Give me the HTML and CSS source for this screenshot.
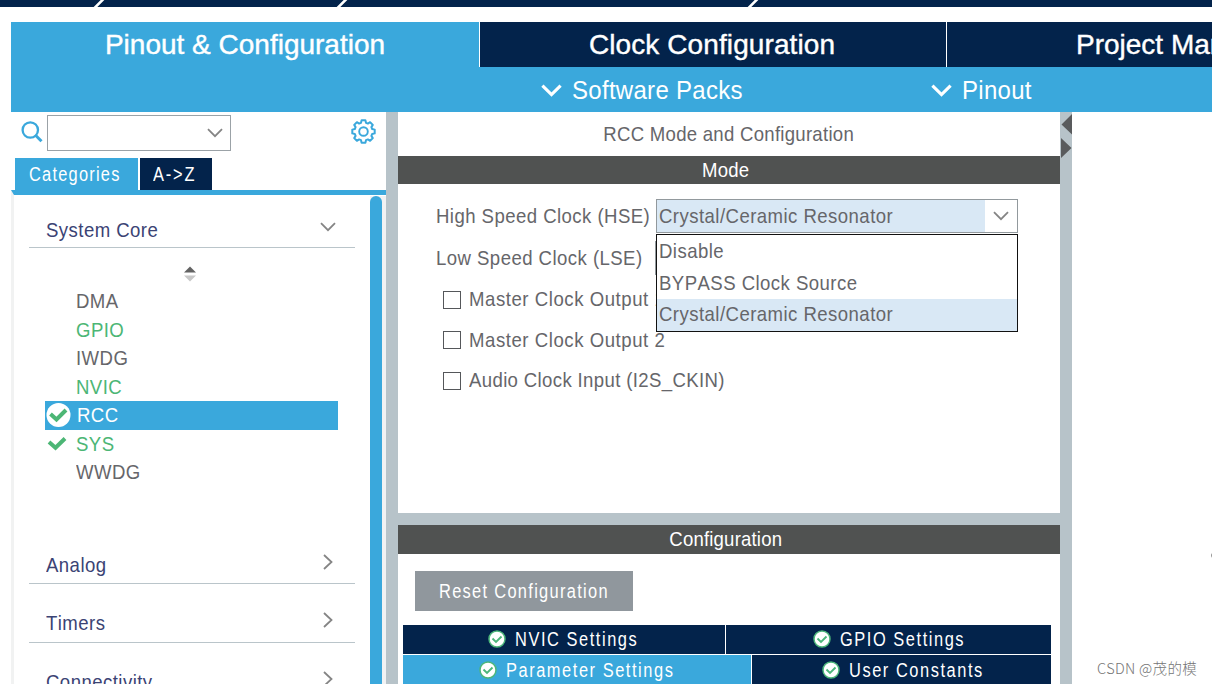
FILE: index.html
```
<!DOCTYPE html>
<html lang="en">
<head>
    <meta charset="UTF-8">
    <meta name="viewport" content="width=device-width, initial-scale=1.0">
    <title>Pinout &amp; Configuration</title>
    <link rel="stylesheet" href="styles.css">
</head>
<body>
    <!-- Shared icons -->
    <svg class="defs" width="0" height="0">
        <symbol id="chevron" viewBox="0 0 16 10"><path d="M1 1.2 L8 8.2 L15 1.2" fill="none" stroke="currentColor"/></symbol>
        <symbol id="arrow" viewBox="0 0 10 16"><path d="M1 1 L8.5 8 L1 15" fill="none" stroke="currentColor"/></symbol>
        <symbol id="ok" viewBox="0 0 18 18">
            <circle cx="9" cy="9" r="8" fill="#fff" stroke="#4cb67a" stroke-width="1.5"/>
            <path d="M4.5 8.5 L8 12 L13.5 6.5" fill="none" stroke="#4cb67a" stroke-width="1.9"/>
        </symbol>
    </svg>

    <div class="breadcrumb">
        <svg width="1212" height="7"><path d="M94.500 8 L103.500 -1 M337.500 8 L346.500 -1 M748.500 8 L757.500 -1" stroke="#fff" stroke-width="2.600"/></svg>
    </div>

    <div class="main-tabs">
        <div class="main-tab active"><span>Pinout &amp; Configuration</span></div>
        <div class="main-tab clock"><span>Clock Configuration</span></div>
        <div class="main-tab project"><span>Project Manager</span></div>
    </div>
    <div class="sub-menu">
        <div class="menu packs"><svg class="menu-icon"><use href="#chevron"/></svg><span>Software Packs</span></div>
        <div class="menu"><svg class="menu-icon"><use href="#chevron"/></svg><span>Pinout</span></div>
    </div>

    <div class="workspace">
        <div class="sidebar">
            <div class="search-row">
                <svg class="search-icon" viewBox="0 0 22 22"><circle cx="9.300" cy="9" r="7.700" fill="none" stroke="#3aa8dc" stroke-width="2.300"/><path d="M14.800 14.500 L20.500 20.200" stroke="#3aa8dc" stroke-width="3"/></svg>
                <div class="search-box"><svg class="chevron"><use href="#chevron"/></svg></div>
                <svg class="gear" viewBox="-12.500 -12.500 25 25" fill="none" stroke="#3aa8dc">
                    <circle r="4.300" stroke-width="1.900"/>
                    <path stroke-width="2" stroke-linejoin="round" d="M-1.900 -11.200 L1.900 -11.200 L2.500 -8.700 L4.400 -7.900 L6.600 -9.300 L9.300 -6.600 L7.900 -4.400 L8.700 -2.500 L11.200 -1.900 L11.200 1.900 L8.700 2.500 L7.900 4.400 L9.300 6.600 L6.600 9.300 L4.400 7.900 L2.500 8.700 L1.900 11.200 L-1.900 11.200 L-2.500 8.700 L-4.400 7.900 L-6.600 9.300 L-9.300 6.600 L-7.900 4.400 L-8.700 2.500 L-11.200 1.900 L-11.200 -1.900 L-8.700 -2.500 L-7.900 -4.400 L-9.300 -6.600 L-6.600 -9.300 L-4.400 -7.900 L-2.500 -8.700 Z"/>
                </svg>
            </div>
            <div class="side-tabs">
                <div class="side-tab active"><span class="spaced">Categories</span></div>
                <div class="side-tab az"><span class="spaced">A-&gt;Z</span></div>
            </div>
            <div class="side-body">
                <div class="categories">
                    <div class="category open"><span class="narrow">System Core</span><svg class="chevron"><use href="#chevron"/></svg></div>
                    <div class="sort"><svg width="12" height="16"><path d="M0 6.500 L6 0.500 L12 6.500 Z" fill="#636363"/><path d="M0 9.500 L6 15.500 L12 9.500 Z" fill="#c8c8c8"/></svg></div>
                    <ul class="peripherals">
                        <li><span class="narrow">DMA</span></li>
                        <li class="used"><span class="narrow">GPIO</span></li>
                        <li><span class="narrow">IWDG</span></li>
                        <li class="used"><span class="narrow">NVIC</span></li>
                        <li class="selected"><svg class="mark" viewBox="0 0 26 26"><circle cx="13.500" cy="13" r="12" fill="#fff"/><path d="M5.500 12 L11.500 17.500 L21 8" fill="none" stroke="#4cb675" stroke-width="4"/></svg><span class="narrow">RCC</span></li>
                        <li class="used"><svg class="mark" viewBox="0 0 26 26"><path d="M4 11 L10.500 16.700 L20 7.500" fill="none" stroke="#4cb675" stroke-width="4"/></svg><span class="narrow">SYS</span></li>
                        <li><span class="narrow">WWDG</span></li>
                    </ul>
                    <div class="category"><span class="narrow">Analog</span><svg class="arrow"><use href="#arrow"/></svg></div>
                    <div class="category"><span class="narrow">Timers</span><svg class="arrow"><use href="#arrow"/></svg></div>
                    <div class="category"><span class="narrow">Connectivity</span><svg class="arrow"><use href="#arrow"/></svg></div>
                </div>
                <div class="scrollbar"></div>
            </div>
        </div>

        <div class="splitter"></div>

        <div class="center">
            <div class="panel-title"><span class="narrow tight">RCC Mode and Configuration</span></div>
            <div class="section-title"><span class="narrow tight">Mode</span></div>
            <div class="mode">
                <div class="field">
                    <label class="narrow">High Speed Clock (HSE)</label>
                    <div class="select hse">
                        <div class="value"><span class="narrow">Crystal/Ceramic Resonator</span></div>
                        <svg class="chevron"><use href="#chevron"/></svg>
                        <div class="options">
                            <div class="option"><span class="narrow">Disable</span></div>
                            <div class="option"><span class="narrow">BYPASS Clock Source</span></div>
                            <div class="option current"><span class="narrow">Crystal/Ceramic Resonator</span></div>
                        </div>
                    </div>
                </div>
                <div class="field lse">
                    <label class="narrow">Low Speed Clock (LSE)</label>
                    <div class="select"></div>
                </div>
                <div class="check mco"><i class="box"></i><span class="narrow">Master Clock Output 1</span></div>
                <div class="check mco"><i class="box"></i><span class="narrow">Master Clock Output 2</span></div>
                <div class="check"><i class="box"></i><span class="narrow">Audio Clock Input (I2S_CKIN)</span></div>
            </div>
            <div class="h-splitter"></div>
            <div class="section-title"><span class="narrow tight">Configuration</span></div>
            <div class="config">
                <div class="reset"><span class="spaced">Reset Configuration</span></div>
                <div class="config-tabs">
                    <div class="config-tab nvic"><svg class="ok"><use href="#ok"/></svg><span class="spaced">NVIC Settings</span></div>
                    <div class="config-tab gpio"><svg class="ok"><use href="#ok"/></svg><span class="spaced">GPIO Settings</span></div>
                </div>
                <div class="config-tabs">
                    <div class="config-tab params"><svg class="ok"><use href="#ok"/></svg><span class="spaced">Parameter Settings</span></div>
                    <div class="config-tab user"><svg class="ok"><use href="#ok"/></svg><span class="spaced">User Constants</span></div>
                </div>
            </div>
        </div>

        <div class="splitter">
            <svg width="12" height="48"><path d="M12 2 L1.500 12.500 L12 22.500 Z M1 26 L11.500 36 L1 46 Z" fill="#595b5d"/></svg>
        </div>

        <div class="canvas">
            <i class="dot"></i>
            <div class="watermark">CSDN @茂的模</div>
        </div>
    </div>
</body>
</html>
```
FILE: styles.css
```
* {
    box-sizing: border-box;
}
body {
    margin: 0;
    width: 1212px;
    height: 684px;
    overflow: hidden;
    background: #fff;
    font-family: "Liberation Sans", Arial, sans-serif;
    font-size: 21px;
    font-kerning: none;
    color: #66666a;
    white-space: nowrap;
}
svg {
    display: block;
    flex: none;
}
.defs {
    position: absolute;
}
/* Condensed label text */
.narrow {
    display: inline-block;
    letter-spacing: 0.5px;
    transform: scaleX(0.885);
    transform-origin: left;
}
.narrow.tight {
    letter-spacing: 0.2px;
    transform-origin: center;
}
.spaced {
    display: inline-block;
    font-size: 20px;
    letter-spacing: 1.7px;
    transform: scaleX(0.82);
    transform-origin: left;
}
.breadcrumb {
    height: 7px;
    background: #03234b;
    overflow: hidden;
}

/* Main tabs */
.main-tabs {
    display: flex;
    gap: 1px;
    margin: 15px 0 0 11px;
    height: 45px;
    overflow: hidden;
}
.main-tab {
    flex: none;
    background: #03234b;
    color: #fff;
    font-size: 28px;
    line-height: 46px;
    text-align: center;
    -webkit-text-stroke: 0.4px #fff;
}
.main-tab.active {
    width: 468px;
    background: #3aa8dc;
}
.main-tab.clock {
    width: 466px;
    padding-right: 2px;
    letter-spacing: 0.1px;
}
.main-tab.project {
    flex: 1;
    min-width: 0;
    padding-left: 129px;
    text-align: left;
    overflow: hidden;
}
.sub-menu {
    display: flex;
    height: 45px;
    margin-left: 11px;
    padding-left: 530px;
    background: #3aa8dc;
    color: #fff;
    font-size: 25px;
    line-height: 46px;
}
.menu {
    display: flex;
    align-items: center;
}
.menu span {
    letter-spacing: 0.3px;
    transform: scaleX(0.96);
    transform-origin: left;
}
.packs {
    width: 390px;
}
.menu-icon {
    width: 21px;
    height: 13px;
    margin: 2px 10px 0 0;
    stroke-width: 2.4;
}

/* Workspace */
.workspace {
    display: flex;
    height: 572px;
}
.sidebar {
    width: 375px;
    margin-left: 11px;
    flex: none;
}
.search-row {
    display: flex;
    height: 46px;
    padding: 3px 0 0 10px;
}
.search-icon {
    width: 22px;
    height: 22px;
    margin: 6px 4px 0 0;
}
.search-box {
    display: flex;
    justify-content: flex-end;
    align-items: center;
    width: 184px;
    height: 36px;
    padding-right: 7px;
    border: 1.5px solid #9ba2a7;
}
.chevron {
    width: 16px;
    height: 10px;
    color: #858585;
    stroke-width: 1.8;
}
.arrow {
    width: 10px;
    height: 16px;
    color: #858585;
    stroke-width: 1.8;
}
.gear {
    width: 25px;
    height: 25px;
    margin: 4px 0 0 120px;
}
.side-tabs {
    display: flex;
    gap: 2px;
    height: 32px;
    padding-left: 4px;
}
.side-tab {
    width: 123px;
    height: 32px;
    padding-left: 14px;
    background: #3aa8dc;
    color: #fff;
    line-height: 32px;
}
.side-tab.az {
    width: 72px;
    padding-left: 13px;
    background: #03234b;
}
.side-tab.active .spaced {
    letter-spacing: 1.5px;
}
.side-tab.az .spaced {
    letter-spacing: 2.2px;
}
.side-body {
    display: flex;
    height: 494px;
    border-top: 5px solid #3aa8dc;
    border-left: 3px solid #f1f2f2;
    overflow: hidden;
}
.categories {
    width: 356px;
    padding-left: 15px;
}
.category {
    display: flex;
    justify-content: space-between;
    width: 326px;
    height: 58.6px;
    padding: 26px 22px 0 17px;
    border-bottom: 1.5px solid #bac5ca;
    color: #3b4374;
    line-height: 26px;
}
.category.open {
    height: 53px;
    padding: 21.5px 19px 0 17px;
}
.category .chevron {
    margin-top: 5px;
}
.category .arrow {
    margin-top: 2px;
}
.sort {
    height: 39px;
    padding: 18px 0 0 155px;
}
.peripherals {
    list-style: none;
    width: 293px;
    margin: 0 0 39px 16px;
    padding: 0;
}
.peripherals li {
    display: flex;
    align-items: center;
    height: 28.5px;
    padding-left: 31px;
    line-height: 28.5px;
}
.peripherals .used {
    color: #4cb675;
}
.peripherals .selected {
    background: #3aa8dc;
    color: #fff;
}
.mark {
    width: 26px;
    height: 26px;
    margin: 0 5px 0 -31px;
}
.peripherals .selected .mark {
    margin-right: 6px;
}
.scrollbar {
    width: 16px;
    margin-top: 1px;
    background: #f1f2f3;
}
.scrollbar::before {
    content: "";
    display: block;
    width: 12px;
    height: 510px;
    border-radius: 6px;
    background: #3aa8dc;
}
.splitter {
    width: 12px;
    flex: none;
    background: #b7c3c9;
}

/* Center panel */
.center {
    display: flex;
    flex-direction: column;
    width: 662px;
    flex: none;
}
.panel-title {
    height: 43.5px;
    padding-right: 1px;
    line-height: 43.5px;
    text-align: center;
}
.panel-title .tight {
    letter-spacing: 0.3px;
}
.section-title {
    height: 28.5px;
    flex: none;
    padding-right: 6px;
    background: #505251;
    color: #fff;
    line-height: 28.5px;
    text-align: center;
}
.mode {
    height: 328.5px;
    flex: none;
    padding: 15px 0 0 37.5px;
}
.field {
    display: flex;
    height: 34px;
    line-height: 34px;
}
.field label {
    width: 220.5px;
    flex: none;
}
.field.lse {
    margin: 8px 0 4px;
}
.lse .select {
    margin-left: -1px;
}
.select {
    display: flex;
    align-items: center;
    position: relative;
    width: 362px;
    height: 34px;
    border: 1px solid #92999d;
    line-height: 32px;
}
.value {
    width: 328px;
    padding-left: 2px;
    margin-right: 8px;
    background: #d9e8f5;
}
.options {
    position: absolute;
    z-index: 1;
    top: 34px;
    left: -1px;
    width: 362px;
    height: 98px;
    border: 1.5px solid #111;
    background: #fff;
}
.option {
    height: 32px;
    padding-left: 2px;
    line-height: 31px;
}
.option.current {
    line-height: 30px;
    background: #d9e8f5;
}
.check {
    display: flex;
    align-items: center;
    height: 40.5px;
    padding-left: 7.5px;
}
.check .narrow {
    letter-spacing: 0.4px;
}
.check.mco .narrow {
    letter-spacing: 0.62px;
}
.box {
    width: 18px;
    height: 18px;
    margin: 1px 8px 0 0;
    border: 1.5px solid #55575a;
}
.h-splitter {
    height: 12px;
    flex: none;
    margin-top: -0.5px;
    background: #b7c3c9;
}
.mode + .h-splitter {
    margin-top: 0.5px;
}
.config {
    flex: 1;
    min-height: 0;
    padding: 17px 9px 0 4.5px;
    overflow: hidden;
}
.reset {
    width: 218px;
    height: 40px;
    margin: 0 0 14px 12px;
    padding-left: 24px;
    background: #90979d;
    color: #fff;
    line-height: 40px;
}
.reset .spaced {
    letter-spacing: 1.6px;
}
.config-tabs {
    display: flex;
    gap: 1px;
    margin-bottom: 1px;
}
.config-tab {
    display: flex;
    align-items: center;
    flex: none;
    height: 29px;
    background: #03234b;
    color: #fff;
    line-height: 30px;
}
.config-tab .spaced {
    letter-spacing: 1.9px;
}
.ok {
    width: 18px;
    height: 18px;
    margin-right: 9px;
}
.nvic {
    width: 322px;
    padding-left: 85.5px;
}
.gpio {
    width: 325.5px;
    padding-left: 87px;
}
.params {
    width: 348.5px;
    height: 32px;
    padding: 0 0 2px 76.5px;
    background: #3aa8dc;
}
.user {
    width: 299px;
    height: 32px;
    padding: 0 0 2px 69.5px;
}

/* Pinout canvas */
.canvas {
    display: flex;
    flex: 1;
    align-items: flex-end;
    justify-content: flex-end;
    position: relative;
    overflow: hidden;
}
.dot {
    position: absolute;
    top: 441px;
    right: -4px;
    width: 5px;
    height: 5px;
    border-radius: 50%;
    background: #999;
}
.watermark {
    padding: 0 15px 5px 0;
    color: #757575;
    font-family: "Noto Sans CJK SC", sans-serif;
    font-size: 14.5px;
    font-weight: 300;
    letter-spacing: 0.3px;
    line-height: 22px;
}
```
